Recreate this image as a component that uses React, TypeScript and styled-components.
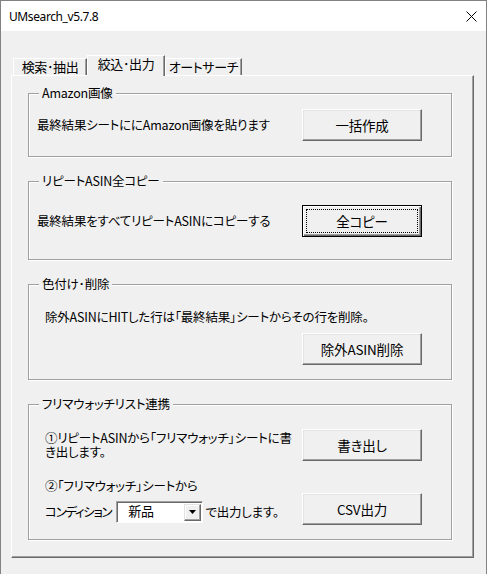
import React from 'react';
import styled, { createGlobalStyle } from 'styled-components';

const GlobalStyle = createGlobalStyle`
  html, body {
    margin: 0;
    padding: 0;
    background: #f0f0f0;
  }
  body {
    font-family: "Noto Sans CJK JP", "Noto Sans", sans-serif;
    font-size: 12.5px;
    letter-spacing: -0.2px;
    color: #000;
    font-feature-settings: "palt";
  }
`;

const Window = styled.div`
  width: 487px;
  height: 574px;
  box-sizing: border-box;
  border: 1px solid #828282;
  border-bottom: none;
  background: #f0f0f0;
  overflow: hidden;
  display: flex;
  flex-direction: column;
`;

const TitleBar = styled.div`
  height: 30px;
  flex-shrink: 0;
  background: #fff;
  display: flex;
  align-items: center;
  justify-content: space-between;
  padding-left: 8px;
`;

const Title = styled.div`
  font-family: "Noto Sans", sans-serif;
  font-size: 12px;
  letter-spacing: -0.4px;
  font-feature-settings: normal;
`;

const CloseIcon = styled.svg`
  width: 11px;
  height: 11px;
  margin-right: 9px;
`;

const Body = styled.div`
  padding: 24px 12px 0 10px;
`;

const TabStrip = styled.div`
  display: flex;
  align-items: flex-end;
  height: 21px;
  padding-left: 2px;
  margin-bottom: -1px;
  position: relative;
  z-index: 1;
`;

const Tab = styled.div<{ $w: number; $active?: boolean }>`
  box-sizing: border-box;
  width: ${(p) => p.$w}px;
  height: ${(p) => (p.$active ? 21 : 17)}px;
  margin-bottom: ${(p) => (p.$active ? 0 : 1)}px;
  background: #f0f0f0;
  border-top: 1px solid #fff;
  border-left: 1px solid #fff;
  border-right: 1px solid #696969;
  box-shadow: inset -1px 0 #a0a0a0;
  font-size: 13px;
  letter-spacing: -0.4px;
  line-height: 16px;
  text-align: center;
  white-space: nowrap;
`;

const Panel = styled.div`
  box-sizing: border-box;
  width: 463px;
  height: 483px;
  border-top: 1px solid #fff;
  border-left: 1px solid #fff;
  border-right: 1px solid #696969;
  border-bottom: 1px solid #696969;
  box-shadow: inset -1px -1px #a0a0a0;
  padding: 9px 0 0 16px;
  display: flex;
  flex-direction: column;
  gap: 16px;
`;

const Group = styled.fieldset`
  box-sizing: border-box;
  width: 424px;
  margin: 0;
  padding: 0;
  min-width: 0;
  border: 1px solid #a0a0a0;
  box-shadow: inset 1px 1px #fff, 1px 1px #fff;
`;

const Legend = styled.legend`
  margin-left: 10px;
  padding: 0 3px;
  font-size: 12.5px;
  line-height: 16px;
  background: #f0f0f0;
`;

const GroupBody = styled.div<{ $h: number; $pt: number; $pl: number }>`
  box-sizing: border-box;
  height: ${(p) => p.$h}px;
  padding: ${(p) => p.$pt}px 29px 0 ${(p) => p.$pl}px;
  display: flex;
  flex-direction: column;
`;

const Row = styled.div`
  display: flex;
  align-items: center;
  justify-content: space-between;
`;

const Text = styled.div<{ $lh?: number }>`
  line-height: ${(p) => p.$lh ?? 16}px;
  white-space: nowrap;
`;

const Button = styled.button<{ $focused?: boolean }>`
  box-sizing: border-box;
  width: 120px;
  height: 32px;
  flex-shrink: 0;
  margin: 0;
  padding: 0;
  background: #f0f0f0;
  font-family: inherit;
  font-size: 13.5px;
  font-weight: 400;
  letter-spacing: -0.2px;
  font-feature-settings: "palt";
  color: #000;
  border: 1px solid;
  border-color: ${(p) => (p.$focused ? '#000' : '#fff #696969 #696969 #fff')};
  box-shadow: ${(p) =>
    p.$focused
      ? 'inset 1px 1px #fff, inset -1px -1px #696969, inset -2px -2px #a0a0a0'
      : 'inset -1px -1px #a0a0a0, inset 1px 1px #e3e3e3'};
  outline: ${(p) => (p.$focused ? '1px dotted #000' : 'none')};
  outline-offset: -5px;
`;

const RightButton = styled(Button)`
  align-self: flex-end;
  margin-top: 8px;
`;

const StepRow = styled.div`
  display: flex;
  justify-content: space-between;
  align-items: flex-start;
  margin-top: 17px;
`;

const StepColumn = styled.div`
  display: flex;
  flex-direction: column;
  gap: 7px;
`;

const ConditionLine = styled.div`
  display: flex;
  align-items: center;
  gap: 2px;
  line-height: 16px;
`;

const ConditionLabel = styled.span`
  letter-spacing: -1.3px;
`;

const Combo = styled.div`
  box-sizing: border-box;
  width: 87px;
  height: 22px;
  margin-left: 3px;
  background: #fff;
  border: 1px solid;
  border-color: #a0a0a0 #fff #fff #a0a0a0;
  box-shadow: inset 1px 1px #696969;
  display: flex;
  align-items: center;
  justify-content: space-between;
  padding: 0 1px 0 11px;
`;

const ComboValue = styled.span`
  font-size: 13px;
  line-height: 16px;
  margin-top: -3px;
`;

const DropButton = styled.div`
  box-sizing: border-box;
  width: 17px;
  height: 17px;
  background: #f0f0f0;
  border: 1px solid;
  border-color: #e3e3e3 #696969 #696969 #e3e3e3;
  box-shadow: inset -1px -1px #a0a0a0, inset 1px 1px #fff;
  display: flex;
  align-items: center;
  justify-content: center;
`;

const CsvButton = styled(Button)`
  margin-top: 15px;
`;

const App = () => (
  <>
    <GlobalStyle />
    <Window>
      <TitleBar>
        <Title>UMsearch_v5.7.8</Title>
        <CloseIcon viewBox="0 0 11 11">
          <path d="M0.5 0.5 L10.5 10.5 M10.5 0.5 L0.5 10.5" stroke="#000" strokeWidth="1" fill="none" />
        </CloseIcon>
      </TitleBar>
      <Body>
        <TabStrip>
          <Tab $w={74}>検索･抽出</Tab>
          <Tab $w={78} $active>絞込･出力</Tab>
          <Tab $w={77}>オートサーチ</Tab>
        </TabStrip>
        <Panel>
          <Group>
            <Legend>Amazon画像</Legend>
            <GroupBody $h={55} $pt={8} $pl={8}>
              <Row>
                <Text>最終結果シートににAmazon画像を貼ります</Text>
                <Button>一括作成</Button>
              </Row>
            </GroupBody>
          </Group>

          <Group>
            <Legend>リピートASIN全コピー</Legend>
            <GroupBody $h={70} $pt={16} $pl={8}>
              <Row>
                <Text>最終結果をすべてリピートASINにコピーする</Text>
                <Button $focused>全コピー</Button>
              </Row>
            </GroupBody>
          </Group>

          <Group>
            <Legend>色付け･削除</Legend>
            <GroupBody $h={87} $pt={17} $pl={16}>
              <Text>除外ASINにHITした行は「最終結果」シートからその行を削除。</Text>
              <RightButton>除外ASIN削除</RightButton>
            </GroupBody>
          </Group>

          <Group>
            <Legend>フリマウォッチリスト連携</Legend>
            <GroupBody $h={127} $pt={17} $pl={16}>
              <Row>
                <Text $lh={14}>
                  ①リピートASINから「フリマウォッチ」シートに書
                  <br />
                  き出します。
                </Text>
                <Button>書き出し</Button>
              </Row>
              <StepRow>
                <StepColumn>
                  <Text>②「フリマウォッチ」シートから</Text>
                  <ConditionLine>
                    <ConditionLabel>コンディション</ConditionLabel>
                    <Combo>
                      <ComboValue>新品</ComboValue>
                      <DropButton>
                        <svg width="7" height="4" viewBox="0 0 7 4">
                          <path d="M0 0 H7 L3.5 4 Z" fill="#000" />
                        </svg>
                      </DropButton>
                    </Combo>
                    <span>で出力します。</span>
                  </ConditionLine>
                </StepColumn>
                <CsvButton>CSV出力</CsvButton>
              </StepRow>
            </GroupBody>
          </Group>
        </Panel>
      </Body>
    </Window>
  </>
);

export default App;
